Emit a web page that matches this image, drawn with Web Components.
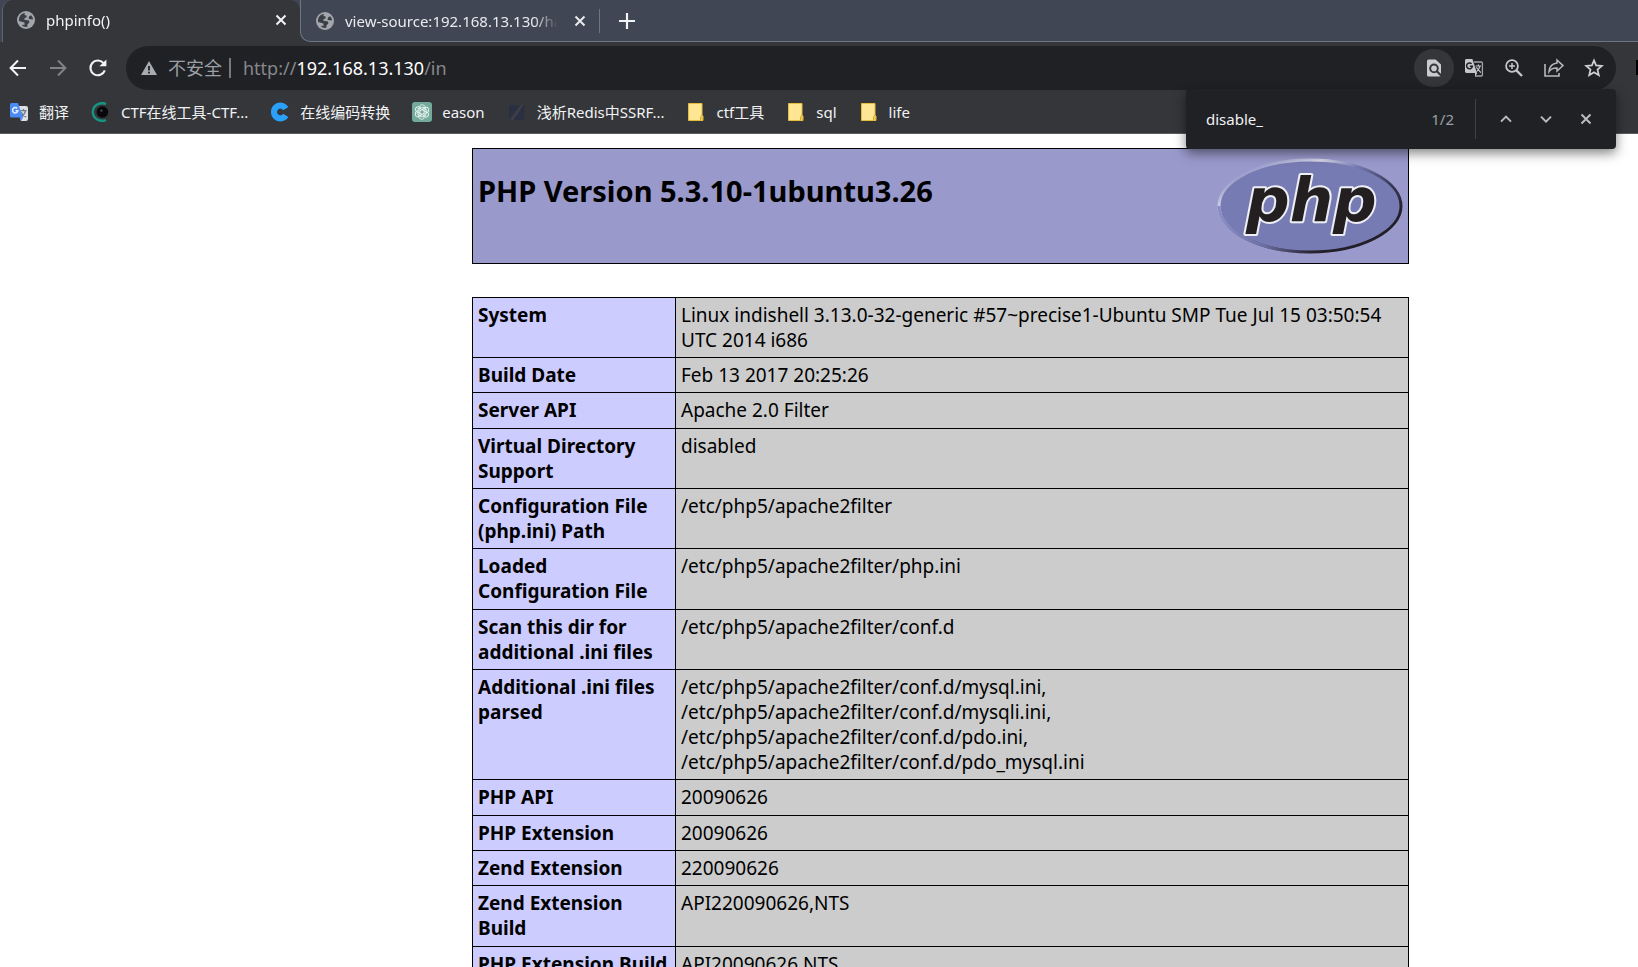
<!DOCTYPE html>
<html lang="zh-CN">
<head>
<meta charset="utf-8">
<title>phpinfo()</title>
<style>
html { height: 100%; }
body {
  margin: 0; height: 100%; overflow: hidden; background: #fff; color: #000;
  font-family: "Noto Sans", "Noto Sans CJK SC", sans-serif;
}
</style>
</head>
<body>
<browser-window>
  <tab-strip slot="tabs">
    <browser-tab slot="active" active>phpinfo()</browser-tab>
    <browser-tab>view-source:192.168.13.130/hack</browser-tab>
  </tab-strip>
  <address-bar slot="toolbar"></address-bar>
  <bookmark-bar slot="toolbar">
    <bookmark-link icon="translate">翻译</bookmark-link>
    <bookmark-link icon="eye">CTF在线工具-CTF...</bookmark-link>
    <bookmark-link icon="cee">在线编码转换</bookmark-link>
    <bookmark-link icon="knot">eason</bookmark-link>
    <bookmark-link icon="zed">浅析Redis中SSRF...</bookmark-link>
    <bookmark-link icon="folder">ctf工具</bookmark-link>
    <bookmark-link icon="folder">sql</bookmark-link>
    <bookmark-link icon="folder">life</bookmark-link>
  </bookmark-bar>
  <find-bar slot="overlay"></find-bar>
  <php-info>
    <php-banner slot="banner">PHP Version 5.3.10-1ubuntu3.26</php-banner>
    <info-table></info-table>
  </php-info>
</browser-window>

<script>
const svg = (w, h, box, body) =>
  `<svg width="${w}" height="${h}" viewBox="${box}" fill="none" aria-hidden="true">${body}</svg>`;

const RESET = `
  :host, *, *::before { box-sizing: border-box; }
  svg { display: block; flex: none; }
  button, input { font: inherit; color: inherit; background: none; border: 0; padding: 0; margin: 0; outline: 0; }
  button { display: flex; align-items: center; justify-content: center; flex: none; cursor: pointer; }
`;

const define = (name, markup) => {
  const template = document.createElement('template');
  customElements.define(name, class extends HTMLElement {
    connectedCallback() {
      if (this.shadowRoot) return;
      const root = this.attachShadow({ mode: 'open' });
      template.innerHTML = typeof markup === 'function' ? markup(this) : markup;
      root.append(template.content.cloneNode(true));
    }
  });
};

const knotPetals = [0, 60, 120, 180, 240, 300].map(a =>
  `<path d="M10 7.6 L7.8 8.8 V4.9 C7.8 2.6 10.6 2 12 3.6 L13.6 4.4 M7.8 6.8 L11 5 L14 6.7" transform="rotate(${a} 10 10)"/>`).join('');

const ICONS = {
  globe: svg(20, 20, '0 0 20 20', `
    <circle cx="10" cy="10" r="9" fill="#a3a6aa"/>
    <path d="M3 9.2 C3 6.3 5 3.9 7.6 3.2 L9 3 L8.4 5 L10.6 5.6 L10.6 7.4 L8.6 8 L8.4 9.8 L13 10.4 L13.4 12.4 L11.4 14.4 L11.4 16.8 C9 17.2 7 16.4 5.6 15 L8.6 14.8 L8.4 12.4 L3 11 Z" fill="#3b3e45"/>
    <path d="M12.6 9 L13 6.6 L15 5.2 C16.4 6.4 17 8 17 9.6 Z" fill="#3b3e45"/>`),
  close: svg(12, 12, '0 0 12 12', '<path d="M1.5 1.5 L10.5 10.5 M10.5 1.5 L1.5 10.5" stroke="currentColor" stroke-width="2"/>'),
  translate: svg(20, 20, '0 0 20 20', `
    <path d="M8 4 H17 Q19 4 19 6 V17 Q19 19 17 19 H12 Z" fill="#dcdfe3"/>
    <path d="M11.5 8.6 H17.5 M14.5 7 V8.6 M16.6 8.8 C15.8 11.8 13.6 14 11.6 15 M12.4 10.2 C13.4 12.6 15.4 14.2 17.2 15" stroke="#6e7987" stroke-width="1.2"/>
    <path d="M2.5 1 H9 L14 15.5 L12 19 L10.8 15.5 H2.5 Q1 15.5 1 14 V2.5 Q1 1 2.5 1 Z" fill="#4c8bf5"/>
    <path d="M8.2 6.4 A2.7 2.7 0 1 0 8.9 8.7 H6.6" stroke="#eaf1fe" stroke-width="1.4"/>`),
  eye: svg(20, 20, '0 0 20 20', `
    <path d="M15 1.8 C8 -.4 1.8 4 1.8 10 C1.8 16 8 20.4 15 18.2" stroke="#159680" stroke-width="2.4"/>
    <circle cx="11.4" cy="10" r="5.8" fill="#08080a"/><circle cx="10.4" cy="8.6" r="1.2" fill="#4a4d55"/>`),
  cee: svg(20, 20, '0 0 20 20', `
    <path d="M15.8 6.6 A6.4 6.4 0 1 0 15.8 13.4" stroke="#2ba0fb" stroke-width="6"/>`),
  knot: svg(20, 20, '0 0 20 20', `
    <rect width="20" height="20" rx="3" fill="#74aa9c"/>
    <g stroke="#e4f0ec" stroke-width="1">${knotPetals}</g>`),
  zed: svg(20, 20, '0 0 20 20', `
    <path d="M2 3 H13 L2 17 Z" fill="#2b2f42"/><path d="M16 3.6 L17.4 3.6 V18 H7 L10 14 L13 10 Z" fill="#2b2f42"/>
    <path d="M15.6 2.6 L4.4 18" stroke="#3e4256" stroke-width="1.4"/>`),
  folder: svg(20, 20, '0 0 20 20', `
    <path d="M2.5 1.5 H16 V13 L17 14 V18.5 H2.5 Z" fill="#ffe694" stroke="#e4bd3e"/>
    <path d="M14.5 18 V14.6 L16 13 V18" fill="#ffe694" stroke="#d9ae2a"/>`),
  back: svg(20, 20, '0 0 20 20', '<path d="M18 10 H3 M10 2.5 L2.6 10 L10 17.5" stroke="#f1f3f4" stroke-width="2"/>'),
  forward: svg(20, 20, '0 0 20 20', '<path d="M2 10 H17 M10 2.5 L17.4 10 L10 17.5" stroke="#808286" stroke-width="2"/>'),
  reload: svg(20, 20, '0 0 20 20', `
    <path d="M16.8 12.4 A7.4 7.4 0 1 1 15.4 5" stroke="#f1f3f4" stroke-width="2.1"/>
    <path d="M18.4 1.4 V8.2 H11.4 Z" fill="#f1f3f4"/>`),
  warning: svg(16, 16, '0 0 16 16', `
    <path d="M8 1 L16 15 H0 Z" fill="#a8abaf"/><path d="M8 6 V10.6 M8 11.8 V13.6" stroke="#202124" stroke-width="1.8"/>`),
  page: svg(20, 20, '0 0 20 20', `
    <path d="M3 3 Q3 1.4 4.6 1.4 H11.6 L17 6.6 V17 Q17 18.6 15.4 18.6 H4.6 Q3 18.6 3 17 Z" fill="#c9cbce"/>
    <circle cx="10" cy="10.4" r="3.8" stroke="#35363a" stroke-width="2"/>
    <path d="M12.6 13 L17.4 17.8" stroke="#35363a" stroke-width="2.2"/>`),
  gtranslate: svg(20, 20, '0 0 20 20', `
    <path d="M10 4 H17.4 Q18.4 4 18.4 5 V17 Q18.4 18 17.4 18 H11" stroke="#a3a5a8" stroke-width="1.3"/>
    <path d="M2.5 1 H8.4 L13 15 H2.5 Q1 15 1 13.6 V2.4 Q1 1 2.5 1 Z" fill="#c6c7ca"/>
    <path d="M11 15 H13.4 L11 18.4 Z" fill="#c6c7ca"/>
    <path d="M7.6 5.8 A2.9 2.9 0 1 0 8.4 8.2 H5.8" stroke="#202124" stroke-width="1.5"/>
    <path d="M11.6 8 H17 M14.4 6.6 V8 M16 8.2 C15.4 10.8 13.8 12.6 12.6 13.6 M12.4 9.4 L16.8 14.6" stroke="#c6c7ca" stroke-width="1.2"/>`),
  zoom: svg(20, 20, '0 0 20 20', `
    <circle cx="8" cy="8" r="5.9" stroke="#c6c7ca" stroke-width="1.8"/>
    <path d="M12.4 12.4 L18 18" stroke="#c6c7ca" stroke-width="2.4"/><path d="M5 8 H11 M8 5 V11" stroke="#c6c7ca" stroke-width="1.5"/>`),
  share: svg(22, 20, '0 0 22 20', `
    <path d="M2 6 V18 H16 V15" stroke="#b6b8bb" stroke-width="1.6"/>
    <path d="M14 2 L20 7.6 L14 13 V10 C10.4 9.8 7.8 11 6 13.6 C6.4 9 9 5.6 14 5 Z" stroke="#b6b8bb" stroke-width="1.5"/>`),
  star: svg(20, 20, '0 0 20 20', `
    <path d="M10 2.4 L12.1 7.4 L17.8 7.9 L13.5 11.5 L14.8 17.2 L10 14.2 L5.2 17.2 L6.5 11.5 L2.2 7.9 L7.9 7.4 Z" stroke="#d0d1d4" stroke-width="1.7"/>`),
  up: svg(14, 14, '0 0 14 14', '<path d="M2 9.6 L7 4.6 L12 9.6" stroke="#b9bbbe" stroke-width="2"/>'),
  down: svg(14, 14, '0 0 14 14', '<path d="M2 4.6 L7 9.6 L12 4.6" stroke="#b9bbbe" stroke-width="2"/>'),
  plus: svg(16, 16, '0 0 16 16', '<path d="M8 0 V16 M0 8 H16" stroke="#f1f3f4" stroke-width="2.2"/>'),
};

define('browser-window', `
  <style>${RESET}
    :host { display: flex; flex-direction: column; height: 100%; position: relative; }
    header { flex: none; background: #35363a; border-bottom: 1px solid #5b5c60; }
    main { flex: 1; min-height: 0; overflow: hidden; }
  </style>
  <header><slot name="tabs"></slot><slot name="toolbar"></slot></header>
  <main><slot></slot></main>
  <slot name="overlay"></slot>`);

define('tab-strip', `
  <style>${RESET}
    :host { display: flex; height: 42px; background: #35363a; }
    .front { background: #404653; padding-left: 2px; }
    .rest {
      flex: 1; display: flex; align-items: center; background: #404653; height: 42px;
      border: solid #6f7682; border-width: 0 0 1px 1px; border-bottom-left-radius: 10px;
    }
    i { width: 1px; height: 24px; background: #6f7682; }
    .new { width: 54px; height: 40px; }
  </style>
  <div class="front"><slot name="active"></slot></div>
  <div class="rest"><slot></slot><i></i><button class="new" aria-label="New tab">${ICONS.plus}</button></div>`);

define('browser-tab', `
  <style>${RESET}
    :host {
      display: flex; align-items: center; gap: 10px; width: 298px; height: 40px;
      padding: 0 7px 0 14px; font-size: 15px; line-height: 20px; color: #e9eaed;
    }
    :host([active]) {
      height: 42px; padding: 0 7px 2px 13px; background: #35363a; color: #f1f3f4;
      border: solid #5d636f; border-width: 0 0 0 1px; border-radius: 10px 10px 0 0;
    }
    span {
      flex: 1; min-width: 0; overflow: hidden; white-space: nowrap;
      -webkit-mask-image: linear-gradient(to left, transparent, #000 24px);
      mask-image: linear-gradient(to left, transparent, #000 24px);
    }
    button { width: 24px; height: 24px; }
  </style>
  ${ICONS.globe}<span><slot></slot></span><button aria-label="Close tab">${ICONS.close}</button>`);

define('address-bar', `
  <style>${RESET}
    :host { display: flex; align-items: center; height: 52px; padding: 0 22px 0 0; position: relative; }
    nav { display: flex; gap: 4px; margin-right: 10px; }
    nav button { width: 36px; height: 36px; }
    .box {
      flex: 1; display: flex; align-items: center; height: 44px; border-radius: 22px;
      background: #202124; color: #9aa0a6; font-size: 18px; line-height: 24px; padding: 0 2px 0 15px;
    }
    .safe { margin-left: 11px; }
    i { width: 2px; height: 20px; margin: 0 12px 0 7px; background: #76797d; }
    .url { flex: 1; outline: 0; white-space: nowrap; color: #85888c; }
    .url b { font-weight: 400; color: #fff; }
    .box button { width: 40px; height: 38px; border-radius: 20px; }
    .box button.on { background: #35363a; }
    .cut { position: absolute; right: 0; top: 18px; width: 2px; height: 15px; background: #000; }
  </style>
  <nav>
    <button aria-label="Back">${ICONS.back}</button>
    <button aria-label="Forward">${ICONS.forward}</button>
    <button aria-label="Reload">${ICONS.reload}</button>
  </nav>
  <div class="box">
    ${ICONS.warning}<span class="safe">不安全</span><i></i>
    <div class="url" role="textbox" contenteditable="true" spellcheck="false" aria-label="Address">http://<b>192.168.13.130</b>/in</div>
    <button class="on" aria-label="Find in page">${ICONS.page}</button>
    <button aria-label="Translate">${ICONS.gtranslate}</button>
    <button aria-label="Zoom">${ICONS.zoom}</button>
    <button aria-label="Share">${ICONS.share}</button>
    <button aria-label="Bookmark">${ICONS.star}</button>
  </div>
  <div class="cut"></div>`);

define('bookmark-bar', `
  <style>${RESET}
    :host { display: flex; align-items: center; gap: 22px; height: 39px; padding: 0 9px 4px; }
  </style>
  <slot></slot>`);

define('bookmark-link', host => `
  <style>${RESET}
    :host { display: block; flex: none; }
    a { display: flex; align-items: center; gap: 10px; color: #f1f3f4; font-size: 15px; line-height: 22px; white-space: nowrap; text-decoration: none; }
  </style>
  <a href="#">${ICONS[host.getAttribute('icon')]}<span><slot></slot></span></a>`);

define('find-bar', `
  <style>${RESET}
    :host {
      display: flex; align-items: center; position: absolute; right: 22px; top: 89px; width: 430px; height: 60px;
      padding: 0 10px 0 20px; border-radius: 4px; background: #202124; color: #f1f3f4;
      font-size: 15px; line-height: 20px; box-shadow: 0 4px 12px rgba(0, 0, 0, .5);
    }
    input { flex: 1; min-width: 0; height: 30px; }
    output { color: #9aa0a6; }
    i { width: 1px; height: 40px; background: #3f4145; margin: 0 10px 0 21px; }
    button { width: 40px; height: 40px; color: #b9bbbe; }
  </style>
  <input type="text" value="disable_" aria-label="Find" spellcheck="false"><output>1/2</output><i></i>
  <button aria-label="Previous">${ICONS.up}</button>
  <button aria-label="Next">${ICONS.down}</button>
  <button aria-label="Close">${ICONS.close}</button>`);

define('php-info', `
  <style>${RESET}
    :host { display: grid; grid-template-columns: 472fr 937fr 229fr; padding-top: 14px; }
    section { grid-column: 2; display: grid; gap: 33px; }
  </style>
  <section><slot name="banner"></slot><slot></slot></section>`);

define('php-banner', `
  <style>${RESET}
    :host { display: flex; justify-content: space-between; align-items: flex-start; background: #9999cc; border: 1px solid #000; padding: 5px; }
    h1 { margin: 17px 0 0; font-size: 29px; line-height: 40px; font-weight: 700; }
  </style>
  <h1><slot></slot></h1>
  <svg width="188" height="104" viewBox="0 0 188 104" role="img" aria-label="PHP logo">
    <defs>
      <linearGradient id="rim" x1="0" y1="0" x2="1" y2="1">
        <stop offset=".12" stop-color="#9496c6"/><stop offset=".28" stop-color="#d6d7ea"/>
        <stop offset=".42" stop-color="#7377ad"/><stop offset=".6" stop-color="#3a3a58"/>
        <stop offset=".8" stop-color="#231f28"/>
      </linearGradient>
      <linearGradient id="fade" x1="0" y1="0" x2="1" y2="0">
        <stop offset="0" stop-color="#8a8dc4"/><stop offset=".5" stop-color="#7074a8" stop-opacity=".9"/><stop offset="1" stop-color="#5a5c88" stop-opacity="0"/>
      </linearGradient>
    </defs>
    <ellipse cx="95" cy="52" rx="91" ry="46" fill="#777bb3" stroke="url(#rim)" stroke-width="3"/>
    <path d="M4 52 A91 46 0 0 0 95 98" fill="none" stroke="url(#fade)" stroke-width="3"/>
    <text x="31" y="67" font-family="'DejaVu Sans', sans-serif" font-size="61" font-weight="700" font-style="italic"
      fill="#231f20" stroke="#eeeef5" stroke-width="4" stroke-linejoin="round" paint-order="stroke">php</text>
  </svg>`);

const ROWS = [
  ['System', 'Linux indishell 3.13.0-32-generic #57~precise1-Ubuntu SMP Tue Jul 15 03:50:54 UTC 2014 i686'],
  ['Build Date', 'Feb 13 2017 20:25:26'],
  ['Server API', 'Apache 2.0 Filter'],
  ['Virtual Directory Support', 'disabled'],
  ['Configuration File (php.ini) Path', '/etc/php5/apache2filter'],
  ['Loaded Configuration File', '/etc/php5/apache2filter/php.ini'],
  ['Scan this dir for additional .ini files', '/etc/php5/apache2filter/conf.d'],
  ['Additional .ini files parsed', '/etc/php5/apache2filter/conf.d/mysql.ini,<br>/etc/php5/apache2filter/conf.d/mysqli.ini,<br>/etc/php5/apache2filter/conf.d/pdo.ini,<br>/etc/php5/apache2filter/conf.d/pdo_mysql.ini'],
  ['PHP API', '20090626'],
  ['PHP Extension', '20090626'],
  ['Zend Extension', '220090626'],
  ['Zend Extension Build', 'API220090626,NTS'],
  ['PHP Extension Build', 'API20090626,NTS'],
];

define('info-table', `
  <style>${RESET}
    :host { display: block; }
    table { width: 100%; table-layout: fixed; border-collapse: collapse; font-size: 19px; line-height: 25px; }
    col.key { width: 203px; }
    th, td { border: 1px solid #000; padding: 5px 5px 4px; text-align: left; vertical-align: top; }
    tr:nth-child(3n) > * { padding-bottom: 5px; }
    th { background: #ccccff; font-weight: 700; }
    td { background: #cccccc; }
  </style>
  <table>
    <colgroup><col class="key"><col></colgroup>
    <tbody>${ROWS.map(([k, v]) => `<tr><th scope="row">${k}</th><td>${v}</td></tr>`).join('')}</tbody>
  </table>`);
</script>
</body>
</html>
